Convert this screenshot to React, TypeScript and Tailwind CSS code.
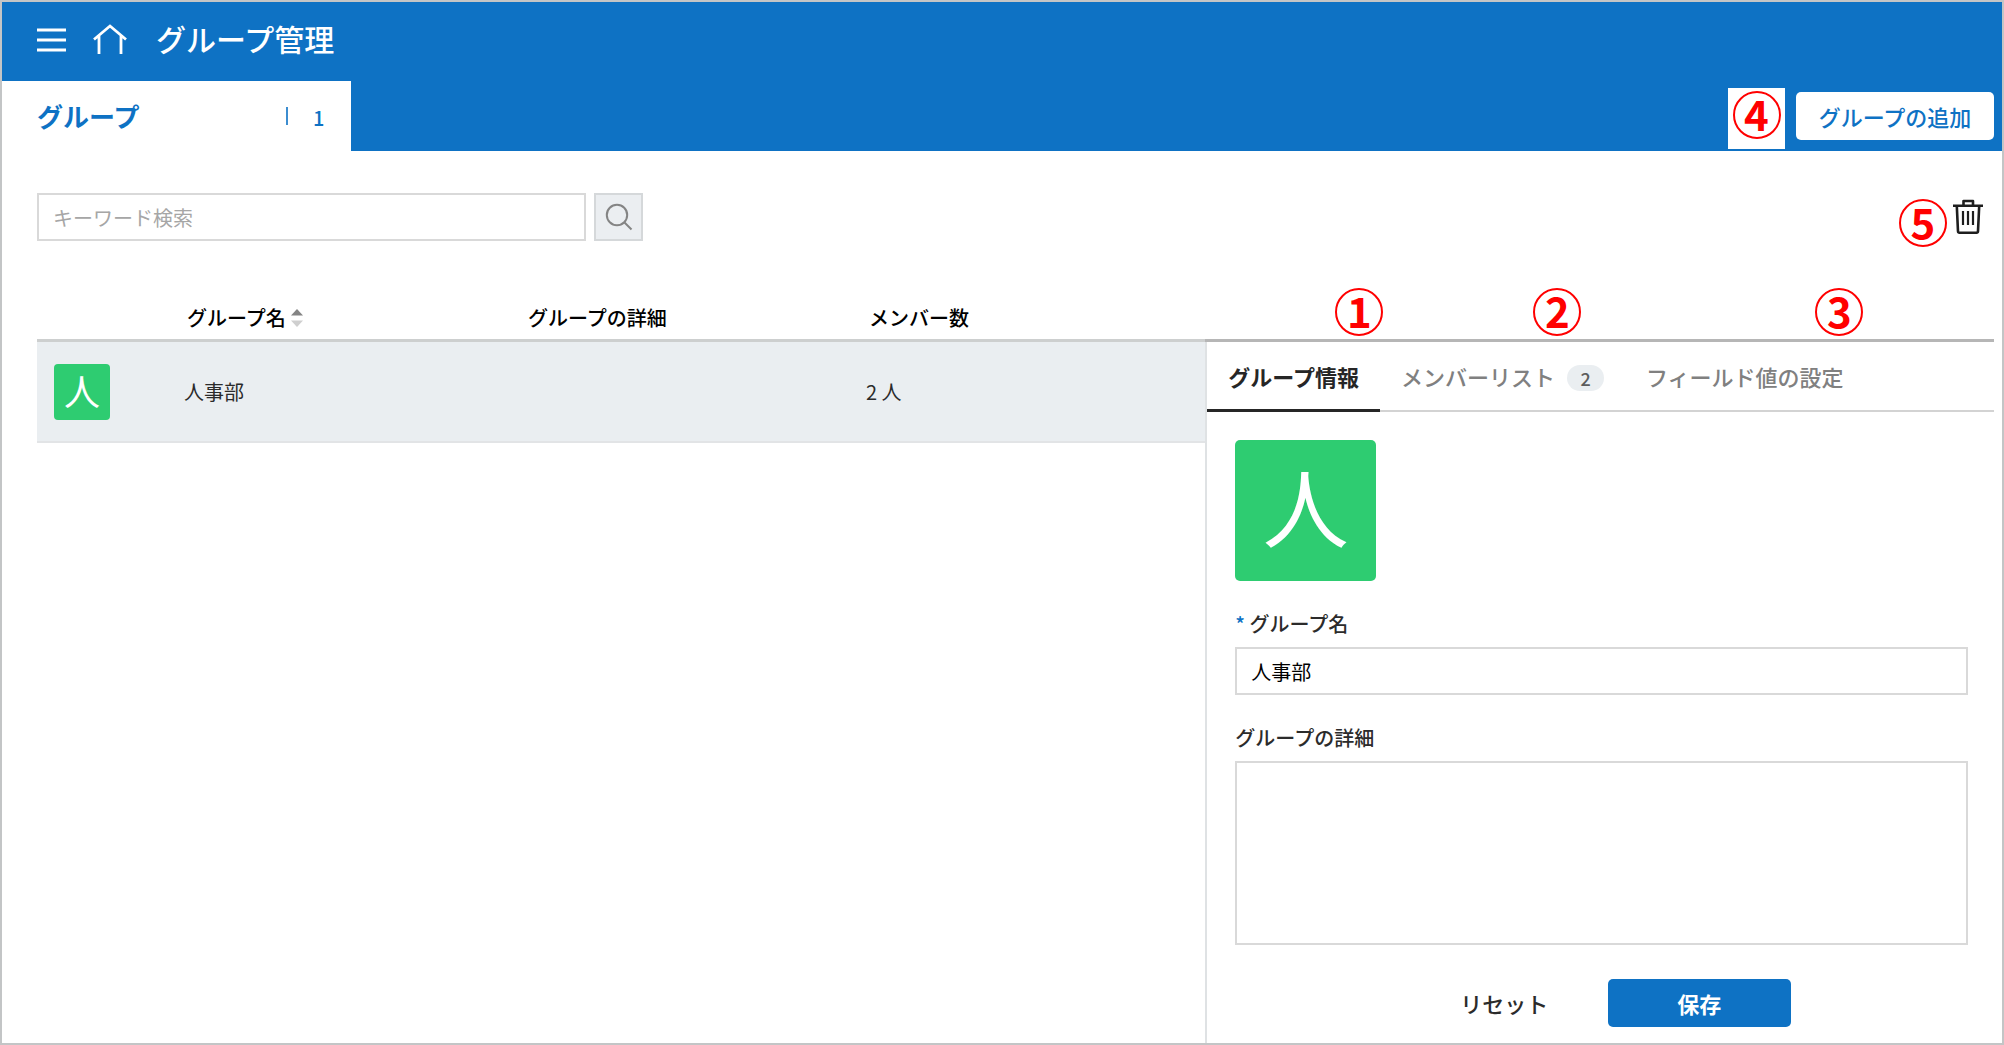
import { useState } from "react";
import type { ReactNode } from "react";

function Marker({ children }: { children: ReactNode }) {
  return (
    <span className="flex size-12 items-center justify-center rounded-full border-2 border-[#ff0000] pb-1 text-[42px] leading-none font-bold text-[#ff0000]">
      {children}
    </span>
  );
}

function MenuIcon() {
  return (
    <svg width="29" height="24" viewBox="0 0 29 24" fill="none" stroke="currentColor" strokeWidth="3" aria-hidden="true">
      <path d="M0 2h29M0 12h29M0 22h29" />
    </svg>
  );
}

function HomeIcon() {
  return (
    <svg width="34" height="31" viewBox="0 0 34 31" fill="none" stroke="currentColor" strokeWidth="2.8" aria-hidden="true">
      <path d="M1 15.5 17 2l16 13.5M6 11.5V30M28 11.500V30" />
    </svg>
  );
}

function SearchIcon() {
  return (
    <svg width="28" height="28" viewBox="0 0 28 28" fill="none" stroke="currentColor" strokeWidth="2" aria-hidden="true">
      <circle cx="12" cy="12" r="10.200" />
      <path d="m19.500 19.500 7 7" />
    </svg>
  );
}

function TrashIcon() {
  return (
    <svg width="30" height="36" viewBox="0 0 30 36" fill="none" stroke="currentColor" strokeWidth="2.6" aria-hidden="true">
      <path d="M0 6.800h30M10.500 6.500V2h9.500v4.500M3.800 7l1.200 25.200q.1 1.500 1.500 1.500h17q1.400 0 1.500-1.500L26.200 7" strokeLinejoin="round" />
      <path d="M10 12v14M15 12v14M20 12v14" strokeWidth="2.200" />
    </svg>
  );
}

function SortIcon() {
  return (
    <svg width="12" height="18" viewBox="0 0 12 18" aria-hidden="true">
      <path d="M0 6.500 6 0l6 6.500z" fill="#848484" />
      <path d="M0 11.500h12L6 18z" fill="#cfcfcf" />
    </svg>
  );
}

const fieldBorder = "w-full border-2 border-[#d9d9d9] bg-white px-3.5 text-xl text-black outline-none";

export default function App() {
  const [name, setName] = useState("人事部");
  const [detail, setDetail] = useState("");

  return (
    <div className="flex min-h-screen flex-col border-2 border-[#c3c5c6] bg-white font-['Noto_Sans_CJK_JP',sans-serif] text-[#2b2b2b]">
      <header className="bg-[#0e72c4] text-white">
        <div className="flex h-[79px] items-center pb-1 pl-[35px]">
          <button type="button" aria-label="メニュー">
            <MenuIcon />
          </button>
          <a href="#home" aria-label="ホーム" className="ml-[27px]">
            <HomeIcon />
          </a>
          <h1 className="ml-[29px] pb-1 text-[30px] leading-none font-medium">グループ管理</h1>
        </div>
        <div className="flex items-stretch justify-between">
          <a href="#groups" className="flex h-[70px] w-[349px] items-center bg-white pl-[35px] text-[#0e72c4]">
            <span className="text-[26px] leading-none font-bold">グループ</span>
            <span className="ml-auto h-[18px] w-0.5 bg-[#3c8dd0]" />
            <span className="mt-1 w-[63px] pl-[25px] text-xl leading-none font-medium">1</span>
          </a>
          <div className="flex items-center gap-[11px] pr-2">
            <span className="mt-1 flex h-[61px] w-[57px] items-start justify-center bg-white pt-[3px]">
              <Marker>4</Marker>
            </span>
            <button type="button" className="h-12 w-[198px] rounded-[5px] bg-white text-[22px] leading-none font-medium text-[#0e72c4]">
              グループの追加
            </button>
          </div>
        </div>
      </header>

      <main className="flex flex-1 flex-col pt-[42px] pr-2 pl-[35px]">
        <div className="flex items-center justify-between pr-[11px]">
          <form className="flex gap-2" onSubmit={(e) => e.preventDefault()}>
            <input
              type="search"
              aria-label="キーワード検索"
              placeholder="キーワード検索"
              className="h-12 w-[549px] border-2 border-[#d9d9d9] px-3.5 text-xl outline-none placeholder:text-[#a6a6a6]"
            />
            <button
              type="submit"
              aria-label="検索"
              className="flex h-12 w-[49px] items-center justify-center border-2 border-[#d5d8da] bg-[#ebeef1] text-[#848484]"
            >
              <SearchIcon />
            </button>
          </form>
          <div className="relative">
            <button type="button" aria-label="削除" className="block text-[#1e1e1e]">
              <TrashIcon />
            </button>
            <span className="absolute top-0 right-full mr-1.5">
              <Marker>5</Marker>
            </span>
          </div>
        </div>

        <div className="mt-[55px] flex flex-1">
          <div className="flex-1">
            <table className="w-full table-fixed border-separate border-spacing-0 text-left text-xl">
              <thead>
                <tr className="h-[46px] text-black [&>th]:border-b-3 [&>th]:border-[#cdcfcf] [&>th]:pl-[18px] [&>th]:font-medium">
                  <th className="w-[132px]" aria-label="アイコン" />
                  <th className="w-[341px]">
                    <button type="button" className="flex items-center gap-[5px]">
                      グループ名
                      <SortIcon />
                    </button>
                  </th>
                  <th className="w-[341px]">グループの詳細</th>
                  <th>メンバー数</th>
                </tr>
              </thead>
              <tbody>
                <tr className="h-[101px] bg-[#eaeef1] [&>td]:border-b-2 [&>td]:border-[#e2e4e6] [&>td]:pl-[15px]">
                  <td>
                    <span className="ml-0.5 flex size-14 items-center justify-center rounded-[4px] bg-[#2ecc71] pb-1 text-4xl leading-none text-white">
                      人
                    </span>
                  </td>
                  <td>人事部</td>
                  <td />
                  <td>2 人</td>
                </tr>
              </tbody>
            </table>
          </div>

          <section className="relative mt-[43px] flex w-[40.3%] flex-col border-t-3 border-[#b6b6b6]">
            <span className="absolute -top-[54px] left-[130px]">
              <Marker>1</Marker>
            </span>
            <span className="absolute -top-[54px] left-[328px]">
              <Marker>2</Marker>
            </span>
            <span className="absolute -top-[54px] left-[610px]">
              <Marker>3</Marker>
            </span>
            <div className="flex-1 border-l-2 border-[#dfe2e4]">
              <div role="tablist" className="flex h-[70px] border-b-2 border-[#d3d3d3] text-[22px] leading-none text-[#808080]">
                <button type="button" role="tab" aria-selected="true" className="-mb-0.5 border-b-3 border-[#262626] px-[21px] font-bold text-[#262626]">
                  グループ情報
                </button>
                <button type="button" role="tab" aria-selected="false" className="flex items-center gap-3 px-[21px] font-medium">
                  メンバーリスト
                  <span className="mt-1 flex h-[26px] w-[37px] items-center justify-center rounded-full bg-[#eaeef1] text-lg leading-none text-[#5c5c5c]">
                    2
                  </span>
                </button>
                <button type="button" role="tab" aria-selected="false" className="px-[21px] font-medium">
                  フィールド値の設定
                </button>
              </div>

              <form className="flex flex-col pt-7 pr-[26px] pl-7" onSubmit={(e) => e.preventDefault()}>
                <span className="flex size-[141px] items-center justify-center rounded-[5px] bg-[#2ecc71] pb-3 text-[86px] leading-none text-white">
                  人
                </span>
                <label htmlFor="group-name" className="mt-7 text-xl leading-[30px] font-medium">
                  <span className="text-[#0e72c4]">*</span> グループ名
                </label>
                <input
                  id="group-name"
                  value={name}
                  onChange={(e) => setName(e.target.value)}
                  className={`${fieldBorder} mt-2 h-12`}
                />
                <label htmlFor="group-detail" className="mt-7 text-xl leading-[30px] font-medium">
                  グループの詳細
                </label>
                <textarea
                  id="group-detail"
                  value={detail}
                  onChange={(e) => setDetail(e.target.value)}
                  className={`${fieldBorder} mt-2 block h-[184px] resize-none py-2`}
                />
                <div className="mt-[34px] flex justify-center gap-3 text-[22px] leading-none">
                  <button type="reset" className="h-12 w-[183px] font-medium">
                    リセット
                  </button>
                  <button type="submit" className="h-12 w-[183px] rounded-[5px] bg-[#0e72c4] font-bold text-white">
                    保存
                  </button>
                </div>
              </form>
            </div>
          </section>
        </div>
      </main>
    </div>
  );
}
